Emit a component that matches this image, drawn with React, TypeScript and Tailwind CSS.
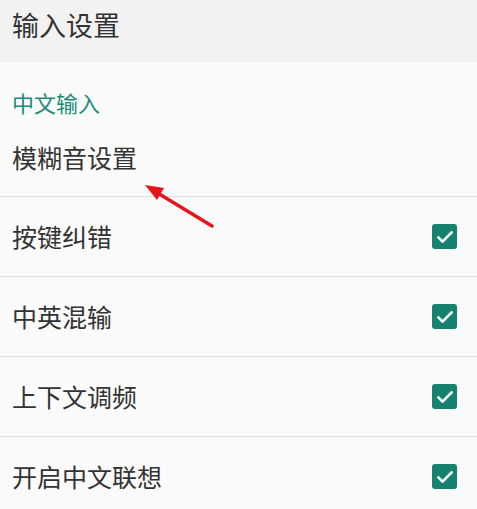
import React from "react";

const rows = ["按键纠错", "中英混输", "上下文调频", "开启中文联想"];

const Check = () => (
  <div className="w-[25px] h-[25px] rounded-[3px] bg-[#15826f] flex items-center justify-center">
    <svg width="20" height="20" viewBox="0 0 24 24" fill="none">
      <path
        d="M4 12.5l5 5L20 6.5"
        stroke="#fff"
        strokeWidth="3.2"
        strokeLinecap="round"
        strokeLinejoin="round"
      />
    </svg>
  </div>
);

export default function App() {
  return (
    <div
      className="relative w-[477px] h-[509px] overflow-hidden bg-[#fafafa] text-[#333333]"
      style={{ fontFamily: '"Noto Sans CJK SC", "Noto Sans", sans-serif' }}
    >
      {/* Toolbar */}
      <div className="h-[62px] bg-[#f2f2f2] flex items-start px-3 pt-[11px]">
        <span className="text-[27px] leading-none">输入设置</span>
      </div>

      {/* Category */}
      <div className="h-[80px] flex items-center px-3">
        <span className="text-[22px] leading-none text-[#1c8a78]">中文输入</span>
      </div>
      <div className="h-[54px] flex items-start px-3 pt-[3px]">
        <span className="text-[25px] leading-none">模糊音设置</span>
      </div>

      {rows.map((r) => (
        <div
          key={r}
          className="h-[80px] border-t border-[#dedede] flex items-center justify-between pl-3 pr-[20px]"
        >
          <span className="text-[25px] leading-none">{r}</span>
          <Check />
        </div>
      ))}

      {/* Annotation arrow */}
      <svg
        className="absolute left-0 top-0 pointer-events-none"
        width="477"
        height="509"
        viewBox="0 0 477 509"
      >
        <line x1="212" y1="226" x2="156" y2="192" stroke="#e8141b" strokeWidth="3.5" strokeLinecap="round" />
        <polygon points="145,185 164,188 157,200" fill="#e8141b" />
      </svg>
    </div>
  );
}
